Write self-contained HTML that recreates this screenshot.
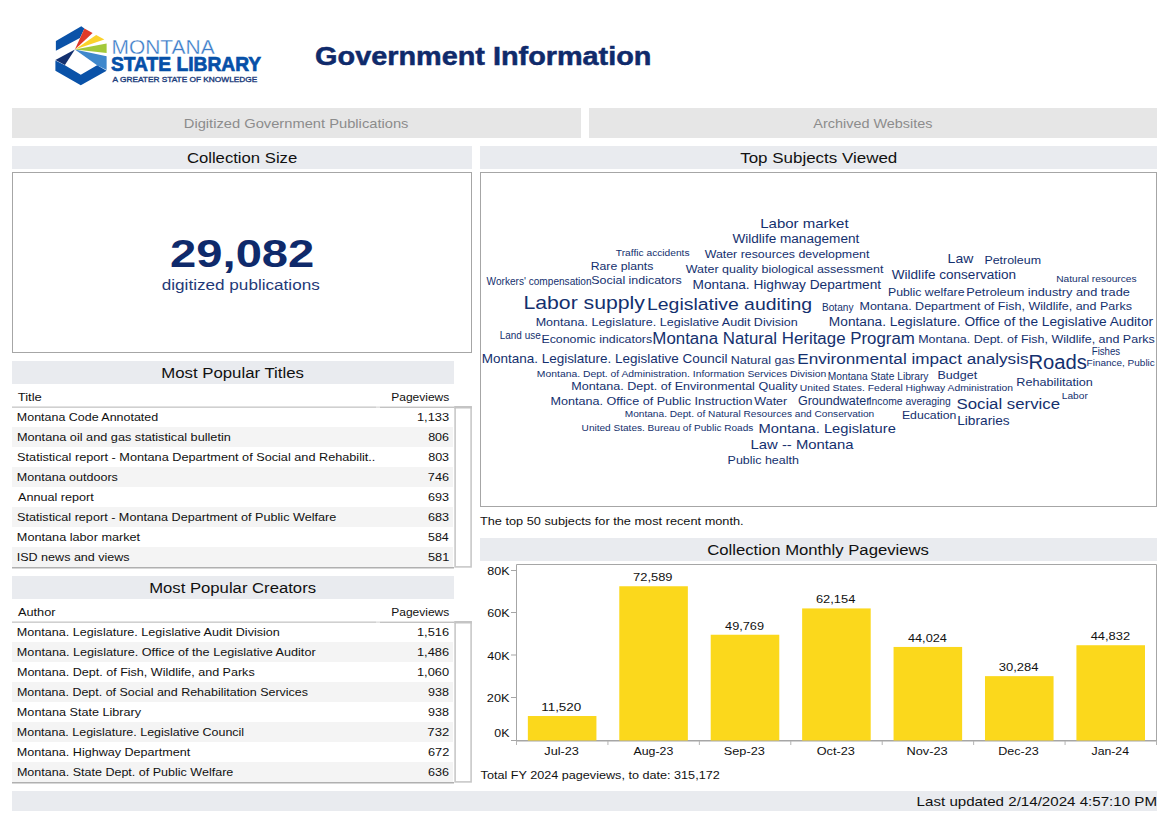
<!DOCTYPE html>
<html><head><meta charset="utf-8"><title>Government Information</title>
<style>
html,body{margin:0;padding:0;background:#fff;width:1169px;height:827px;overflow:hidden}
svg{display:block}
text{font-family:"Liberation Sans",sans-serif;white-space:pre}
</style></head><body>
<svg width="1169" height="827" viewBox="0 0 1169 827">

<polygon points="81.3,26.3 55.9,40.9 55.9,50.8 79.9,38.1 84.4,28.6" fill="#0a52a8"/>
<polygon points="84.4,28.6 92.6,33.1 74.9,49.5" fill="#e03a2a"/>
<polygon points="96.2,35 104.4,39.5 74.9,49.5" fill="#fbd22a"/>
<polygon points="106.6,43.6 106.6,53.1 74.9,49.5" fill="#a3c93a"/>
<polygon points="74.9,49.5 106.6,56.3 106.6,69.9 97.1,65.3" fill="#3f88cc"/>
<polygon points="55.4,59.9 74.9,49.5 64.9,64.9" fill="#13306f"/>
<polygon points="55.4,60.4 64.9,65.3 80.8,74.8 97.1,65.3 106.6,70.8 80.8,85.3 55.4,70.8" fill="#0a52a8"/>

<text x="111.53" y="54.00" font-size="20.00" fill="#3a7bc8" font-weight="normal" textLength="103.11" lengthAdjust="spacingAndGlyphs" stroke="#fff" stroke-width="0.3">MONTANA</text>
<text x="110.95" y="70.80" font-size="19.50" fill="#0650a8" font-weight="bold" textLength="150.22" lengthAdjust="spacingAndGlyphs" stroke="#0650a8" stroke-width="0.7">STATE LIBRARY</text>
<text x="112.59" y="82.00" font-size="7.20" fill="#1c3d7c" font-weight="normal" textLength="144.69" lengthAdjust="spacingAndGlyphs" stroke="#1c3d7c" stroke-width="0.35">A GREATER STATE OF KNOWLEDGE</text>
<text x="315.13" y="64.80" font-size="25.00" fill="#0f2a6b" font-weight="bold" textLength="336.31" lengthAdjust="spacingAndGlyphs" stroke="#0f2a6b" stroke-width="0.5">Government Information</text>
<rect x="12" y="108" width="569" height="30" fill="#e6e6e6" />
<rect x="589" y="108" width="568" height="30" fill="#e6e6e6" />
<text x="183.77" y="128.20" font-size="13.50" fill="#8c8c8c" font-weight="normal" textLength="224.70" lengthAdjust="spacingAndGlyphs">Digitized Government Publications</text>
<text x="813.29" y="128.10" font-size="13.50" fill="#8c8c8c" font-weight="normal" textLength="119.27" lengthAdjust="spacingAndGlyphs">Archived Websites</text>
<rect x="12" y="146" width="460" height="23" fill="#e9ebef" />
<rect x="480" y="146" width="677" height="23" fill="#e9ebef" />
<text x="186.90" y="163.20" font-size="15.50" fill="#111" font-weight="normal" textLength="110.33" lengthAdjust="spacingAndGlyphs">Collection Size</text>
<text x="740.20" y="162.80" font-size="15.50" fill="#111" font-weight="normal" textLength="157.07" lengthAdjust="spacingAndGlyphs">Top Subjects Viewed</text>
<rect x="12.5" y="172.5" width="459" height="180" fill="none" stroke="#a6a6a6" stroke-width="1"/>
<text x="170.10" y="267.20" font-size="39.30" fill="#0f2a6b" font-weight="bold" textLength="144.22" lengthAdjust="spacingAndGlyphs">29,082</text>
<text x="161.75" y="290.00" font-size="15.50" fill="#1f3a78" font-weight="normal" textLength="158.05" lengthAdjust="spacingAndGlyphs">digitized publications</text>
<rect x="480.5" y="172.5" width="676" height="334" fill="none" stroke="#a6a6a6" stroke-width="1"/>
<text x="760.22" y="227.90" font-size="12.94" fill="#14306e" font-weight="normal" textLength="88.38" lengthAdjust="spacingAndGlyphs">Labor market</text>
<text x="732.45" y="242.90" font-size="13.08" fill="#14306e" font-weight="normal" textLength="126.88" lengthAdjust="spacingAndGlyphs">Wildlife management</text>
<text x="615.89" y="256.00" font-size="8.85" fill="#14306e" font-weight="normal" textLength="73.68" lengthAdjust="spacingAndGlyphs">Traffic accidents</text>
<text x="704.69" y="258.00" font-size="11.24" fill="#14306e" font-weight="normal" textLength="164.66" lengthAdjust="spacingAndGlyphs">Water resources development</text>
<text x="947.63" y="263.20" font-size="12.79" fill="#14306e" font-weight="normal" textLength="25.66" lengthAdjust="spacingAndGlyphs">Law</text>
<text x="984.44" y="264.00" font-size="10.41" fill="#14306e" font-weight="normal" textLength="56.55" lengthAdjust="spacingAndGlyphs">Petroleum</text>
<text x="590.67" y="269.70" font-size="10.57" fill="#14306e" font-weight="normal" textLength="62.74" lengthAdjust="spacingAndGlyphs">Rare plants</text>
<text x="685.80" y="272.70" font-size="10.68" fill="#14306e" font-weight="normal" textLength="197.57" lengthAdjust="spacingAndGlyphs">Water quality biological assessment</text>
<text x="891.77" y="279.00" font-size="13.08" fill="#14306e" font-weight="normal" textLength="124.30" lengthAdjust="spacingAndGlyphs">Wildlife conservation</text>
<text x="1056.17" y="281.90" font-size="9.00" fill="#14306e" font-weight="normal" textLength="80.48" lengthAdjust="spacingAndGlyphs">Natural resources</text>
<text x="486.58" y="284.80" font-size="10.46" fill="#14306e" font-weight="normal" textLength="104.96" lengthAdjust="spacingAndGlyphs">Workers&#x27; compensation</text>
<text x="591.30" y="283.50" font-size="11.63" fill="#14306e" font-weight="normal" textLength="90.51" lengthAdjust="spacingAndGlyphs">Social indicators</text>
<text x="692.64" y="288.50" font-size="12.30" fill="#14306e" font-weight="normal" textLength="188.52" lengthAdjust="spacingAndGlyphs">Montana. Highway Department</text>
<text x="887.98" y="296.30" font-size="11.11" fill="#14306e" font-weight="normal" textLength="76.51" lengthAdjust="spacingAndGlyphs">Public welfare</text>
<text x="966.31" y="296.30" font-size="11.11" fill="#14306e" font-weight="normal" textLength="163.53" lengthAdjust="spacingAndGlyphs">Petroleum industry and trade</text>
<text x="523.45" y="308.50" font-size="18.92" fill="#14306e" font-weight="normal" textLength="121.51" lengthAdjust="spacingAndGlyphs">Labor supply</text>
<text x="647.04" y="310.00" font-size="16.13" fill="#14306e" font-weight="normal" textLength="165.07" lengthAdjust="spacingAndGlyphs">Legislative auditing</text>
<text x="822.04" y="311.10" font-size="10.94" fill="#14306e" font-weight="normal" textLength="31.40" lengthAdjust="spacingAndGlyphs">Botany</text>
<text x="859.50" y="309.80" font-size="10.50" fill="#14306e" font-weight="normal" textLength="272.43" lengthAdjust="spacingAndGlyphs">Montana. Department of Fish, Wildlife, and Parks</text>
<text x="535.65" y="325.70" font-size="10.15" fill="#14306e" font-weight="normal" textLength="262.14" lengthAdjust="spacingAndGlyphs">Montana. Legislature. Legislative Audit Division</text>
<text x="828.89" y="326.00" font-size="12.50" fill="#14306e" font-weight="normal" textLength="324.20" lengthAdjust="spacingAndGlyphs">Montana. Legislature. Office of the Legislative Auditor</text>
<text x="499.71" y="338.80" font-size="11.15" fill="#14306e" font-weight="normal" textLength="41.02" lengthAdjust="spacingAndGlyphs">Land use</text>
<text x="541.42" y="343.30" font-size="10.74" fill="#14306e" font-weight="normal" textLength="110.74" lengthAdjust="spacingAndGlyphs">Economic indicators</text>
<text x="652.38" y="344.00" font-size="16.18" fill="#14306e" font-weight="normal" textLength="262.51" lengthAdjust="spacingAndGlyphs">Montana Natural Heritage Program</text>
<text x="918.22" y="342.50" font-size="10.99" fill="#14306e" font-weight="normal" textLength="236.56" lengthAdjust="spacingAndGlyphs">Montana. Dept. of Fish, Wildlife, and Parks</text>
<text x="1091.76" y="355.10" font-size="10.61" fill="#14306e" font-weight="normal" textLength="28.44" lengthAdjust="spacingAndGlyphs">Fishes</text>
<text x="481.67" y="363.10" font-size="12.35" fill="#14306e" font-weight="normal" textLength="245.89" lengthAdjust="spacingAndGlyphs">Montana. Legislature. Legislative Council</text>
<text x="730.86" y="364.10" font-size="11.68" fill="#14306e" font-weight="normal" textLength="63.75" lengthAdjust="spacingAndGlyphs">Natural gas</text>
<text x="797.23" y="363.80" font-size="14.28" fill="#14306e" font-weight="normal" textLength="231.31" lengthAdjust="spacingAndGlyphs">Environmental impact analysis</text>
<text x="1028.41" y="369.20" font-size="19.38" fill="#14306e" font-weight="normal" textLength="58.56" lengthAdjust="spacingAndGlyphs">Roads</text>
<text x="1086.58" y="366.20" font-size="9.25" fill="#14306e" font-weight="normal" textLength="68.23" lengthAdjust="spacingAndGlyphs">Finance, Public</text>
<text x="536.89" y="377.10" font-size="8.98" fill="#14306e" font-weight="normal" textLength="289.38" lengthAdjust="spacingAndGlyphs">Montana. Dept. of Administration. Information Services Division</text>
<text x="827.84" y="380.00" font-size="11.00" fill="#14306e" font-weight="normal" textLength="100.64" lengthAdjust="spacingAndGlyphs">Montana State Library</text>
<text x="937.53" y="378.90" font-size="11.34" fill="#14306e" font-weight="normal" textLength="39.61" lengthAdjust="spacingAndGlyphs">Budget</text>
<text x="571.38" y="389.50" font-size="11.38" fill="#14306e" font-weight="normal" textLength="226.10" lengthAdjust="spacingAndGlyphs">Montana. Dept. of Environmental Quality</text>
<text x="799.86" y="391.10" font-size="8.93" fill="#14306e" font-weight="normal" textLength="213.16" lengthAdjust="spacingAndGlyphs">United States. Federal Highway Administration</text>
<text x="1016.35" y="385.80" font-size="11.02" fill="#14306e" font-weight="normal" textLength="76.49" lengthAdjust="spacingAndGlyphs">Rehabilitation</text>
<text x="1061.79" y="398.90" font-size="9.90" fill="#14306e" font-weight="normal" textLength="25.99" lengthAdjust="spacingAndGlyphs">Labor</text>
<text x="550.45" y="405.20" font-size="11.12" fill="#14306e" font-weight="normal" textLength="202.20" lengthAdjust="spacingAndGlyphs">Montana. Office of Public Instruction</text>
<text x="754.39" y="405.20" font-size="11.49" fill="#14306e" font-weight="normal" textLength="32.82" lengthAdjust="spacingAndGlyphs">Water</text>
<text x="797.93" y="405.20" font-size="11.86" fill="#14306e" font-weight="normal" textLength="72.50" lengthAdjust="spacingAndGlyphs">Groundwater</text>
<text x="868.71" y="405.20" font-size="11.00" fill="#14306e" font-weight="normal" textLength="82.18" lengthAdjust="spacingAndGlyphs">Income averaging</text>
<text x="956.44" y="408.60" font-size="14.55" fill="#14306e" font-weight="normal" textLength="103.62" lengthAdjust="spacingAndGlyphs">Social service</text>
<text x="624.73" y="417.40" font-size="9.36" fill="#14306e" font-weight="normal" textLength="249.46" lengthAdjust="spacingAndGlyphs">Montana. Dept. of Natural Resources and Conservation</text>
<text x="901.90" y="419.00" font-size="11.34" fill="#14306e" font-weight="normal" textLength="54.55" lengthAdjust="spacingAndGlyphs">Education</text>
<text x="957.20" y="424.50" font-size="12.35" fill="#14306e" font-weight="normal" textLength="52.54" lengthAdjust="spacingAndGlyphs">Libraries</text>
<text x="581.64" y="431.20" font-size="9.05" fill="#14306e" font-weight="normal" textLength="171.70" lengthAdjust="spacingAndGlyphs">United States. Bureau of Public Roads</text>
<text x="758.58" y="432.80" font-size="12.65" fill="#14306e" font-weight="normal" textLength="137.24" lengthAdjust="spacingAndGlyphs">Montana. Legislature</text>
<text x="750.55" y="448.60" font-size="12.79" fill="#14306e" font-weight="normal" textLength="103.08" lengthAdjust="spacingAndGlyphs">Law -- Montana</text>
<text x="727.58" y="463.70" font-size="11.48" fill="#14306e" font-weight="normal" textLength="71.29" lengthAdjust="spacingAndGlyphs">Public health</text>
<text x="479.98" y="524.90" font-size="11.30" fill="#111" font-weight="normal" textLength="263.65" lengthAdjust="spacingAndGlyphs">The top 50 subjects for the most recent month.</text>
<rect x="12" y="361" width="442" height="23" fill="#e9ebef" />
<text x="161.16" y="378.00" font-size="15.50" fill="#111" font-weight="normal" textLength="142.80" lengthAdjust="spacingAndGlyphs">Most Popular Titles</text>
<text x="17.68" y="401.00" font-size="11.50" fill="#111" font-weight="normal" textLength="24.12" lengthAdjust="spacingAndGlyphs">Title</text>
<text x="391.19" y="401.00" font-size="11.50" fill="#111" font-weight="normal" textLength="58.10" lengthAdjust="spacingAndGlyphs">Pageviews</text>
<rect x="12" y="406.4" width="364" height="1.6" fill="#d0d0d0" />
<rect x="376" y="406.4" width="4" height="1.6" fill="#e2e2e2" />
<rect x="380" y="406.6" width="74" height="1.3" fill="#bdbdbd" />
<text x="16.86" y="420.90" font-size="11.50" fill="#111" font-weight="normal" textLength="141.31" lengthAdjust="spacingAndGlyphs">Montana Code Annotated</text>
<text x="416.95" y="420.90" font-size="11.50" fill="#111" font-weight="normal" textLength="32.16" lengthAdjust="spacingAndGlyphs">1,133</text>
<rect x="12" y="427" width="441" height="20" fill="#f4f4f4" />
<text x="16.91" y="440.90" font-size="11.50" fill="#111" font-weight="normal" textLength="213.94" lengthAdjust="spacingAndGlyphs">Montana oil and gas statistical bulletin</text>
<text x="428.16" y="440.90" font-size="11.50" fill="#111" font-weight="normal" textLength="20.90" lengthAdjust="spacingAndGlyphs">806</text>
<text x="17.08" y="460.90" font-size="11.50" fill="#111" font-weight="normal" textLength="358.32" lengthAdjust="spacingAndGlyphs">Statistical report - Montana Department of Social and Rehabilit..</text>
<text x="428.16" y="460.90" font-size="11.50" fill="#111" font-weight="normal" textLength="20.92" lengthAdjust="spacingAndGlyphs">803</text>
<rect x="12" y="467" width="441" height="20" fill="#f4f4f4" />
<text x="16.85" y="480.90" font-size="11.50" fill="#111" font-weight="normal" textLength="101.02" lengthAdjust="spacingAndGlyphs">Montana outdoors</text>
<text x="427.87" y="480.90" font-size="11.50" fill="#111" font-weight="normal" textLength="21.15" lengthAdjust="spacingAndGlyphs">746</text>
<text x="17.99" y="500.90" font-size="11.50" fill="#111" font-weight="normal" textLength="75.69" lengthAdjust="spacingAndGlyphs">Annual report</text>
<text x="427.97" y="500.90" font-size="11.50" fill="#111" font-weight="normal" textLength="21.04" lengthAdjust="spacingAndGlyphs">693</text>
<rect x="12" y="507" width="441" height="20" fill="#f4f4f4" />
<text x="17.08" y="520.90" font-size="11.50" fill="#111" font-weight="normal" textLength="319.22" lengthAdjust="spacingAndGlyphs">Statistical report - Montana Department of Public Welfare</text>
<text x="427.97" y="520.90" font-size="11.50" fill="#111" font-weight="normal" textLength="21.04" lengthAdjust="spacingAndGlyphs">683</text>
<text x="16.86" y="540.90" font-size="11.50" fill="#111" font-weight="normal" textLength="123.29" lengthAdjust="spacingAndGlyphs">Montana labor market</text>
<text x="428.04" y="540.90" font-size="11.50" fill="#111" font-weight="normal" textLength="20.71" lengthAdjust="spacingAndGlyphs">584</text>
<rect x="12" y="547" width="441" height="20" fill="#f4f4f4" />
<text x="16.74" y="560.90" font-size="11.50" fill="#111" font-weight="normal" textLength="112.91" lengthAdjust="spacingAndGlyphs">ISD news and views</text>
<text x="427.96" y="560.90" font-size="11.50" fill="#111" font-weight="normal" textLength="21.30" lengthAdjust="spacingAndGlyphs">581</text>
<rect x="12" y="567" width="442" height="1.5" fill="#b0b0b0" />
<rect x="455.1" y="406.9" width="16" height="160" fill="#fff" stroke="#c8c8c8" stroke-width="1.6"/>
<rect x="454.3" y="406.1" width="17.6" height="2.4" fill="#c4c4c4" />
<rect x="12" y="576" width="442" height="23" fill="#e9ebef" />
<text x="149.15" y="593.00" font-size="15.50" fill="#111" font-weight="normal" textLength="166.91" lengthAdjust="spacingAndGlyphs">Most Popular Creators</text>
<text x="17.96" y="616.00" font-size="11.50" fill="#111" font-weight="normal" textLength="37.55" lengthAdjust="spacingAndGlyphs">Author</text>
<text x="391.19" y="616.00" font-size="11.50" fill="#111" font-weight="normal" textLength="58.10" lengthAdjust="spacingAndGlyphs">Pageviews</text>
<rect x="12" y="621.4" width="364" height="1.6" fill="#d0d0d0" />
<rect x="376" y="621.4" width="4" height="1.6" fill="#e2e2e2" />
<rect x="380" y="621.6" width="74" height="1.3" fill="#bdbdbd" />
<text x="16.86" y="635.90" font-size="11.50" fill="#111" font-weight="normal" textLength="262.96" lengthAdjust="spacingAndGlyphs">Montana. Legislature. Legislative Audit Division</text>
<text x="416.95" y="635.90" font-size="11.50" fill="#111" font-weight="normal" textLength="32.15" lengthAdjust="spacingAndGlyphs">1,516</text>
<rect x="12" y="642" width="441" height="20" fill="#f4f4f4" />
<text x="16.85" y="655.90" font-size="11.50" fill="#111" font-weight="normal" textLength="298.77" lengthAdjust="spacingAndGlyphs">Montana. Legislature. Office of the Legislative Auditor</text>
<text x="416.95" y="655.90" font-size="11.50" fill="#111" font-weight="normal" textLength="32.15" lengthAdjust="spacingAndGlyphs">1,486</text>
<text x="16.94" y="675.90" font-size="11.50" fill="#111" font-weight="normal" textLength="237.74" lengthAdjust="spacingAndGlyphs">Montana. Dept. of Fish, Wildlife, and Parks</text>
<text x="416.95" y="675.90" font-size="11.50" fill="#111" font-weight="normal" textLength="32.11" lengthAdjust="spacingAndGlyphs">1,060</text>
<rect x="12" y="682" width="441" height="20" fill="#f4f4f4" />
<text x="16.95" y="695.90" font-size="11.50" fill="#111" font-weight="normal" textLength="291.07" lengthAdjust="spacingAndGlyphs">Montana. Dept. of Social and Rehabilitation Services</text>
<text x="428.10" y="695.90" font-size="11.50" fill="#111" font-weight="normal" textLength="20.99" lengthAdjust="spacingAndGlyphs">938</text>
<text x="16.86" y="715.90" font-size="11.50" fill="#111" font-weight="normal" textLength="124.16" lengthAdjust="spacingAndGlyphs">Montana State Library</text>
<text x="428.10" y="715.90" font-size="11.50" fill="#111" font-weight="normal" textLength="20.99" lengthAdjust="spacingAndGlyphs">938</text>
<rect x="12" y="722" width="441" height="20" fill="#f4f4f4" />
<text x="16.86" y="735.90" font-size="11.50" fill="#111" font-weight="normal" textLength="227.29" lengthAdjust="spacingAndGlyphs">Montana. Legislature. Legislative Council</text>
<text x="427.38" y="735.90" font-size="11.50" fill="#111" font-weight="normal" textLength="21.83" lengthAdjust="spacingAndGlyphs">732</text>
<text x="16.86" y="755.90" font-size="11.50" fill="#111" font-weight="normal" textLength="173.40" lengthAdjust="spacingAndGlyphs">Montana. Highway Department</text>
<text x="427.97" y="755.90" font-size="11.50" fill="#111" font-weight="normal" textLength="21.28" lengthAdjust="spacingAndGlyphs">672</text>
<rect x="12" y="762" width="441" height="20" fill="#f4f4f4" />
<text x="16.95" y="775.90" font-size="11.50" fill="#111" font-weight="normal" textLength="216.35" lengthAdjust="spacingAndGlyphs">Montana. State Dept. of Public Welfare</text>
<text x="427.97" y="775.90" font-size="11.50" fill="#111" font-weight="normal" textLength="21.05" lengthAdjust="spacingAndGlyphs">636</text>
<rect x="12" y="782" width="442" height="1.5" fill="#b0b0b0" />
<rect x="455.1" y="621.9" width="16" height="160" fill="#fff" stroke="#c8c8c8" stroke-width="1.6"/>
<rect x="454.3" y="621.1" width="17.6" height="2.4" fill="#c4c4c4" />
<rect x="480" y="538" width="677" height="23" fill="#e9ebef" />
<text x="707.22" y="554.90" font-size="15.50" fill="#111" font-weight="normal" textLength="221.74" lengthAdjust="spacingAndGlyphs">Collection Monthly Pageviews</text>
<path d="M516.5,741 V564.5 H1156.5 V741" fill="none" stroke="#a6a6a6" stroke-width="1"/>
<rect x="516" y="740" width="641" height="1.5" fill="#a6a6a6" />
<rect x="527.85" y="716.02" width="68.57" height="24.48" fill="#fbd81c" />
<text x="541.19" y="711.02" font-size="11.30" fill="#111" font-weight="normal" textLength="40.10" lengthAdjust="spacingAndGlyphs">11,520</text>
<text x="544.38" y="754.80" font-size="11.30" fill="#111" font-weight="normal" textLength="34.55" lengthAdjust="spacingAndGlyphs">Jul-23</text>
<rect x="619.28" y="586.25" width="68.57" height="154.25" fill="#fbd81c" />
<text x="633.11" y="581.25" font-size="11.30" fill="#111" font-weight="normal" textLength="39.43" lengthAdjust="spacingAndGlyphs">72,589</text>
<text x="633.53" y="754.80" font-size="11.30" fill="#111" font-weight="normal" textLength="39.76" lengthAdjust="spacingAndGlyphs">Aug-23</text>
<rect x="710.71" y="634.74" width="68.57" height="105.76" fill="#fbd81c" />
<text x="725.07" y="629.74" font-size="11.30" fill="#111" font-weight="normal" textLength="38.90" lengthAdjust="spacingAndGlyphs">49,769</text>
<text x="723.85" y="754.80" font-size="11.30" fill="#111" font-weight="normal" textLength="40.95" lengthAdjust="spacingAndGlyphs">Sep-23</text>
<rect x="802.14" y="608.42" width="68.57" height="132.08" fill="#fbd81c" />
<text x="815.92" y="603.42" font-size="11.30" fill="#111" font-weight="normal" textLength="39.41" lengthAdjust="spacingAndGlyphs">62,154</text>
<text x="816.71" y="754.80" font-size="11.30" fill="#111" font-weight="normal" textLength="38.06" lengthAdjust="spacingAndGlyphs">Oct-23</text>
<rect x="893.56" y="646.95" width="68.57" height="93.55" fill="#fbd81c" />
<text x="907.94" y="641.95" font-size="11.30" fill="#111" font-weight="normal" textLength="38.98" lengthAdjust="spacingAndGlyphs">44,024</text>
<text x="906.53" y="754.80" font-size="11.30" fill="#111" font-weight="normal" textLength="41.18" lengthAdjust="spacingAndGlyphs">Nov-23</text>
<rect x="984.99" y="676.15" width="68.57" height="64.35" fill="#fbd81c" />
<text x="998.80" y="671.15" font-size="11.30" fill="#111" font-weight="normal" textLength="39.76" lengthAdjust="spacingAndGlyphs">30,284</text>
<text x="998.25" y="754.80" font-size="11.30" fill="#111" font-weight="normal" textLength="40.48" lengthAdjust="spacingAndGlyphs">Dec-23</text>
<rect x="1076.42" y="645.23" width="68.57" height="95.27" fill="#fbd81c" />
<text x="1090.70" y="640.23" font-size="11.30" fill="#111" font-weight="normal" textLength="39.38" lengthAdjust="spacingAndGlyphs">44,832</text>
<text x="1091.50" y="754.80" font-size="11.30" fill="#111" font-weight="normal" textLength="37.53" lengthAdjust="spacingAndGlyphs">Jan-24</text>
<rect x="516.00" y="741" width="1" height="4" fill="#b4b4b4" />
<rect x="607.43" y="741" width="1" height="4" fill="#b4b4b4" />
<rect x="698.86" y="741" width="1" height="4" fill="#b4b4b4" />
<rect x="790.29" y="741" width="1" height="4" fill="#b4b4b4" />
<rect x="881.71" y="741" width="1" height="4" fill="#b4b4b4" />
<rect x="973.14" y="741" width="1" height="4" fill="#b4b4b4" />
<rect x="1064.57" y="741" width="1" height="4" fill="#b4b4b4" />
<rect x="1156.00" y="741" width="1" height="4" fill="#b4b4b4" />
<rect x="511" y="570.00" width="5.5" height="1" fill="#a6a6a6" />
<text x="487.17" y="575.10" font-size="11.30" fill="#111" font-weight="normal" textLength="22.37" lengthAdjust="spacingAndGlyphs">80K</text>
<rect x="511" y="612.00" width="5.5" height="1" fill="#a6a6a6" />
<text x="487.21" y="617.10" font-size="11.30" fill="#111" font-weight="normal" textLength="22.33" lengthAdjust="spacingAndGlyphs">60K</text>
<rect x="511" y="654.50" width="5.5" height="1" fill="#a6a6a6" />
<text x="487.18" y="659.60" font-size="11.30" fill="#111" font-weight="normal" textLength="22.36" lengthAdjust="spacingAndGlyphs">40K</text>
<rect x="511" y="697.00" width="5.5" height="1" fill="#a6a6a6" />
<text x="486.88" y="702.10" font-size="11.30" fill="#111" font-weight="normal" textLength="22.63" lengthAdjust="spacingAndGlyphs">20K</text>
<rect x="511" y="740.00" width="5.5" height="1" fill="#a6a6a6" />
<text x="494.31" y="736.70" font-size="11.30" fill="#111" font-weight="normal" textLength="15.11" lengthAdjust="spacingAndGlyphs">0K</text>
<text x="480.58" y="778.80" font-size="11.30" fill="#111" font-weight="normal" textLength="239.14" lengthAdjust="spacingAndGlyphs">Total FY 2024 pageviews, to date: 315,172</text>
<rect x="12" y="791" width="1145" height="20" fill="#e9ebef" />
<text x="916.62" y="806.00" font-size="13.20" fill="#111" font-weight="normal" textLength="240.38" lengthAdjust="spacingAndGlyphs">Last updated 2/14/2024 4:57:10 PM</text>
</svg>
</body></html>
